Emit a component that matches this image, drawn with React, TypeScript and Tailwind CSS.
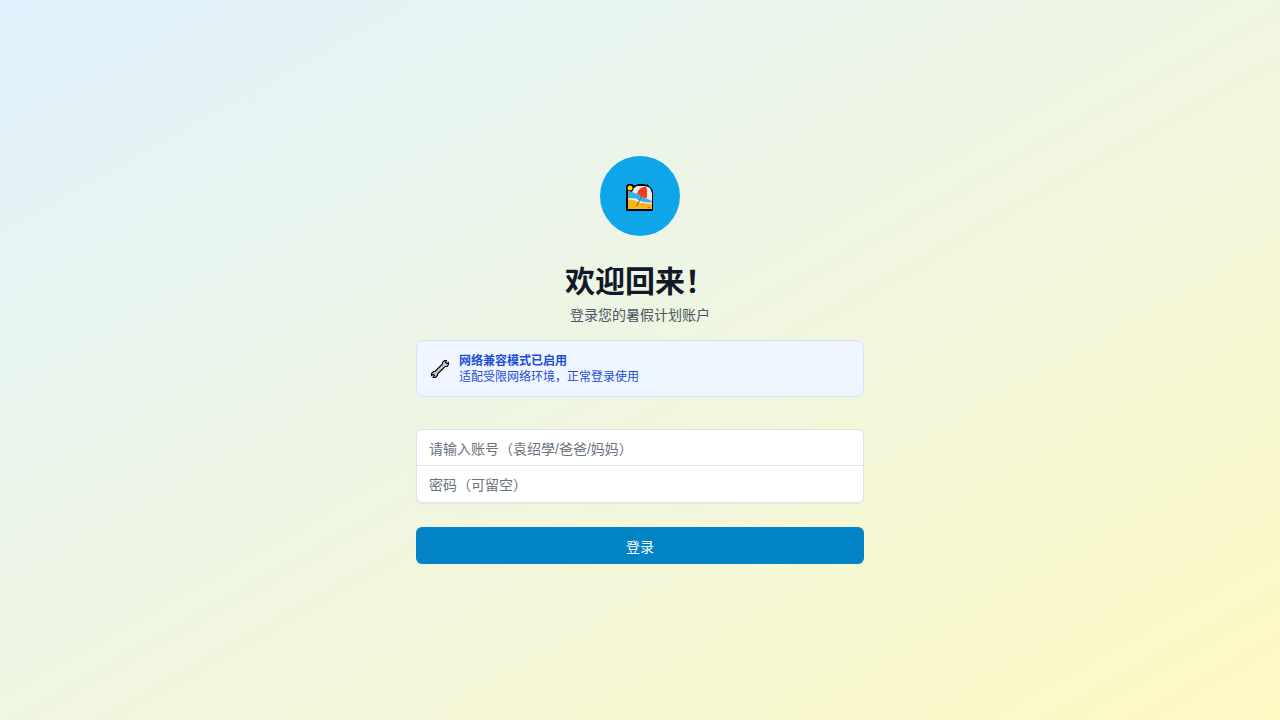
function BeachIcon() {
  return (
    <svg width="28" height="28" viewBox="0 0 28 28" className="mt-[3px]" aria-hidden="true">
      <path d="M0 2 L2 0 H6 L8 1.500 L12 0 H18 L20 1 L21 0 L23 2 L26 5 L27 8 V27 H0 Z" fill="#000" />
      <path d="M2 7 L6 8 L8 4 L11 2 H20 L24 4 L26 9 V25 H2 Z" fill="#f1eaea" />
      <path d="M2 7 L6 8 L11.500 10 L19 14 L26 17 V19 L18 18.500 L11 15.500 L2 14.500 Z" fill="#38b2e5" />
      <path d="M2 14 L10 14.500 L14 17.500 L21 18.500 H26 V20 L17 20 L9 17 L2 16 Z" fill="#f5eddb" />
      <path d="M2 15.500 L8 16 L11 17.500 L15 19 L26 20 V25 H2 Z" fill="#fbb517" />
      <path d="M11 9.500 L12 7 L15 4 L20 2 L21 6 V11 L20.500 14.500 L15.500 12.500 Z" fill="#ef3a1b" />
      <path d="M15.500 12.500 L10.500 22" stroke="#68747a" strokeWidth="1.1" />
      <path d="M21 24 L22.500 22.500 L24 24 Z" fill="#ed5518" />
      <circle cx="4" cy="4" r="2.500" fill="#ffd414" />
    </svg>
  );
}

function WrenchIcon() {
  return (
    <svg width="20" height="20" viewBox="0 0 20 20" aria-hidden="true">
      <path
        d="M14.500 1.500 H16.500 L15.500 3.500 L17 4.500 L18.500 3.500 V5.500 L17 7.500 H15 L7.500 15 V16.500 L5.500 18.500 H3 L4.500 16.500 L3.500 15.500 L1.500 16.500 V14.500 L3.500 12.500 H5 L12.500 5 V3.500 Z"
        fill="#c9c9c7"
        stroke="#000"
        strokeWidth="1.1"
      />
    </svg>
  );
}

export default function App() {
  return (
    <div className="flex h-screen w-full items-center justify-center bg-[linear-gradient(to_bottom_right,#e0f2fe,#fef9c3)] font-['Noto_Sans_CJK_SC',sans-serif]">
      <main className="w-[448px]">
        <header className="flex flex-col items-center">
          <div className="flex size-20 items-center justify-center rounded-full bg-[#0ea5e9]">
            <BeachIcon />
          </div>
          <h1 className="mt-[25px] text-[30px] leading-9 font-bold text-[#111827]">欢迎回来！</h1>
          <p className="mt-[7px] text-sm leading-5 text-[#4b5563]">登录您的暑假计划账户</p>
        </header>

        <div className="mt-4 flex h-[57px] items-center rounded-lg border border-[#cfe3fc] bg-[#eff6ff] pl-[13px]">
          <WrenchIcon />
          <div className="ml-[9px] pb-0.5 text-xs leading-4 text-[#1d4ed8]">
            <p className="font-bold">网络兼容模式已启用</p>
            <p>适配受限网络环境，正常登录使用</p>
          </div>
        </div>

        <form className="mt-8" onSubmit={(event) => event.preventDefault()}>
          <div className="rounded-md shadow-[0_1px_2px_rgba(0,0,0,0.05)]">
            <input
              type="text"
              aria-label="账号"
              placeholder="请输入账号（袁绍學/爸爸/妈妈）"
              className="block h-[37px] w-full rounded-t-md border border-[#dfe2e8] bg-white px-3 pt-0.5 font-['Liberation_Sans','Noto_Sans_CJK_SC',sans-serif] text-sm text-[#111827] outline-none placeholder:text-[#6b7280]"
            />
            <input
              type="password"
              aria-label="密码"
              placeholder="密码（可留空）"
              className="-mt-px block h-[38px] w-full rounded-b-md border border-[#dfe2e8] bg-white px-3 text-sm text-[#111827] outline-none placeholder:text-[#6b7280]"
            />
          </div>
          <button
            type="submit"
            className="mt-6 flex h-[37px] w-full items-center justify-center rounded-md bg-[#0284c7] text-sm text-white"
          >
            登录
          </button>
        </form>
      </main>
    </div>
  );
}
